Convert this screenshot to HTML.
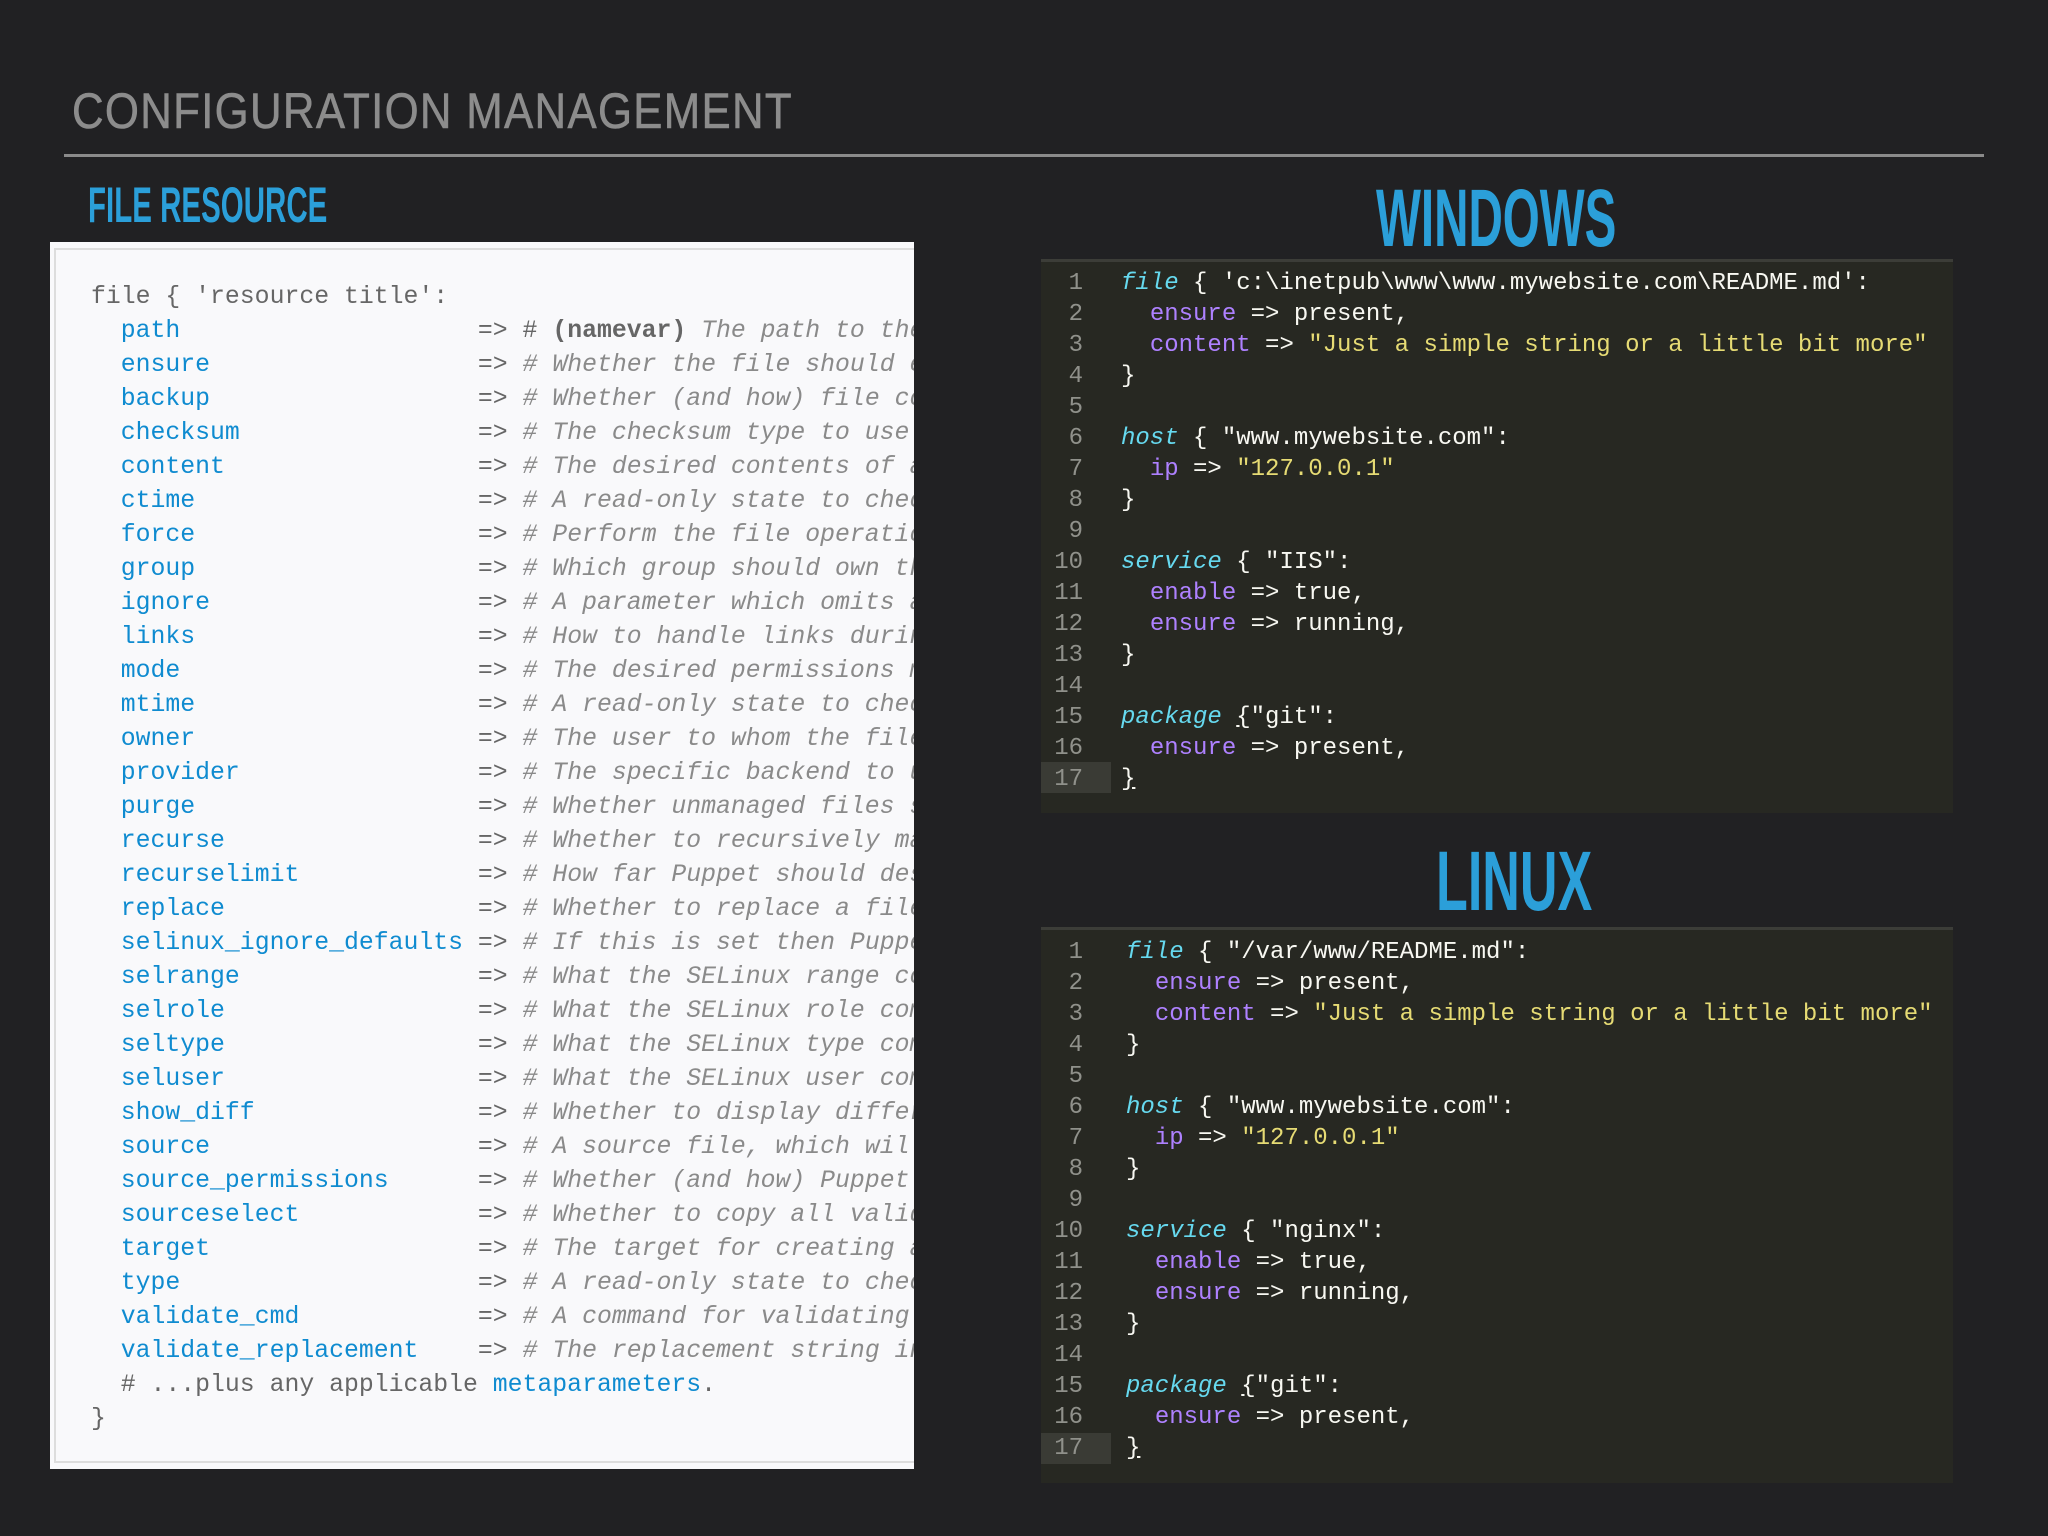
<!DOCTYPE html>
<html><head><meta charset="utf-8"><style>
body{margin:0;width:2048px;height:1536px;background:#212123;position:relative;overflow:hidden;font-family:"Liberation Sans",sans-serif}
.abs{position:absolute;white-space:pre}
#title{left:72px;top:82px;font-size:50px;color:#8c8c8c;letter-spacing:1.5px;transform:scaleX(0.875);transform-origin:0 0;-webkit-text-stroke:0.6px #8c8c8c}
#rule{left:64px;top:154px;width:1920px;height:3px;background:#8a8a8a}
.h{font-family:"Liberation Sans Narrow","Liberation Sans",sans-serif;font-weight:bold;color:#2b9fd9;transform-origin:0 0}
#fr{left:88px;top:176px;font-size:50px;transform:scaleX(0.59)}
#win{left:1376px;top:172px;font-size:82px;transform:scaleX(0.58)}
#lin{left:1436px;top:833px;font-size:84px;transform:scaleX(0.62)}
#panel{left:50px;top:242px;width:864px;height:1227px;background:#f9f9fb;overflow:hidden}
#panel .in{position:absolute;left:4px;top:6px;right:-4px;bottom:6px;border:2px solid #ddd;border-right:none}
.lc{position:absolute;left:41px;font-family:"Liberation Mono",monospace;font-size:24.8px;line-height:34px;color:#666;white-space:pre}
.k{color:#0f8bd0}.c{color:#8a8a8a;font-style:italic}
.box{position:absolute;left:1041px;width:912px;background:#272822;border-top:3px solid #3c3d38}
.ln{position:absolute;left:0;width:42px;text-align:right;color:#90918b}
.row{position:absolute;height:31px;line-height:31px;font-family:"Liberation Mono",monospace;font-size:24px;white-space:pre;color:#f8f8f2;width:100%}
.kw{color:#66d9ef;font-style:italic}.at{color:#ae81ff}.s{color:#e6db74}
.hl{position:absolute;left:0;width:70px;height:31px;background:#3a3b35}
</style></head><body>
<div id="title" class="abs">CONFIGURATION MANAGEMENT</div>
<div id="rule" class="abs"></div>
<div id="fr" class="abs h">FILE RESOURCE</div>
<div id="win" class="abs h">WINDOWS</div>
<div id="lin" class="abs h">LINUX</div>

<div id="panel" class="abs"><div class="in"></div>
<div class="lc" style="top:38px">file { 'resource title':
  <span class="k">path</span>                    =&gt; # <b>(namevar)</b><span class="c"> The path to the file</span>
  <span class="k">ensure</span>                  =&gt; <span class="c"># Whether the file should exist</span>
  <span class="k">backup</span>                  =&gt; <span class="c"># Whether (and how) file content</span>
  <span class="k">checksum</span>                =&gt; <span class="c"># The checksum type to use when</span>
  <span class="k">content</span>                 =&gt; <span class="c"># The desired contents of a file</span>
  <span class="k">ctime</span>                   =&gt; <span class="c"># A read-only state to check the</span>
  <span class="k">force</span>                   =&gt; <span class="c"># Perform the file operation even</span>
  <span class="k">group</span>                   =&gt; <span class="c"># Which group should own the file</span>
  <span class="k">ignore</span>                  =&gt; <span class="c"># A parameter which omits action</span>
  <span class="k">links</span>                   =&gt; <span class="c"># How to handle links during file</span>
  <span class="k">mode</span>                    =&gt; <span class="c"># The desired permissions mode for</span>
  <span class="k">mtime</span>                   =&gt; <span class="c"># A read-only state to check the</span>
  <span class="k">owner</span>                   =&gt; <span class="c"># The user to whom the file should</span>
  <span class="k">provider</span>                =&gt; <span class="c"># The specific backend to use for</span>
  <span class="k">purge</span>                   =&gt; <span class="c"># Whether unmanaged files should be</span>
  <span class="k">recurse</span>                 =&gt; <span class="c"># Whether to recursively manage the</span>
  <span class="k">recurselimit</span>            =&gt; <span class="c"># How far Puppet should descend into</span>
  <span class="k">replace</span>                 =&gt; <span class="c"># Whether to replace a file or</span>
  <span class="k">selinux_ignore_defaults</span> =&gt; <span class="c"># If this is set then Puppet will</span>
  <span class="k">selrange</span>                =&gt; <span class="c"># What the SELinux range component</span>
  <span class="k">selrole</span>                 =&gt; <span class="c"># What the SELinux role component</span>
  <span class="k">seltype</span>                 =&gt; <span class="c"># What the SELinux type component</span>
  <span class="k">seluser</span>                 =&gt; <span class="c"># What the SELinux user component</span>
  <span class="k">show_diff</span>               =&gt; <span class="c"># Whether to display differences</span>
  <span class="k">source</span>                  =&gt; <span class="c"># A source file, which will be</span>
  <span class="k">source_permissions</span>      =&gt; <span class="c"># Whether (and how) Puppet should</span>
  <span class="k">sourceselect</span>            =&gt; <span class="c"># Whether to copy all valid sources</span>
  <span class="k">target</span>                  =&gt; <span class="c"># The target for creating a link</span>
  <span class="k">type</span>                    =&gt; <span class="c"># A read-only state to check the</span>
  <span class="k">validate_cmd</span>            =&gt; <span class="c"># A command for validating the</span>
  <span class="k">validate_replacement</span>    =&gt; <span class="c"># The replacement string in a</span>
  # ...plus any applicable <span class="k">metaparameters</span>.
}</div>
</div>

<div class="box" style="top:259px;height:551px">
<div class="hl" style="top:500px"></div>
<div class="row" style="top:6px"><span class="ln">1</span><span style="position:absolute;left:80px"><span class="kw">file</span> { 'c:\inetpub\www\www.mywebsite.com\README.md':</span></div>
<div class="row" style="top:37px"><span class="ln">2</span><span style="position:absolute;left:80px">  <span class="at">ensure</span> =&gt; present,</span></div>
<div class="row" style="top:68px"><span class="ln">3</span><span style="position:absolute;left:80px">  <span class="at">content</span> =&gt; <span class="s">"Just a simple string or a little bit more"</span></span></div>
<div class="row" style="top:99px"><span class="ln">4</span><span style="position:absolute;left:80px">}</span></div>
<div class="row" style="top:130px"><span class="ln">5</span></div>
<div class="row" style="top:161px"><span class="ln">6</span><span style="position:absolute;left:80px"><span class="kw">host</span> { "www.mywebsite.com":</span></div>
<div class="row" style="top:192px"><span class="ln">7</span><span style="position:absolute;left:80px">  <span class="at">ip</span> =&gt; <span class="s">"127.0.0.1"</span></span></div>
<div class="row" style="top:223px"><span class="ln">8</span><span style="position:absolute;left:80px">}</span></div>
<div class="row" style="top:254px"><span class="ln">9</span></div>
<div class="row" style="top:285px"><span class="ln">10</span><span style="position:absolute;left:80px"><span class="kw">service</span> { "IIS":</span></div>
<div class="row" style="top:316px"><span class="ln">11</span><span style="position:absolute;left:80px">  <span class="at">enable</span> =&gt; true,</span></div>
<div class="row" style="top:347px"><span class="ln">12</span><span style="position:absolute;left:80px">  <span class="at">ensure</span> =&gt; running,</span></div>
<div class="row" style="top:378px"><span class="ln">13</span><span style="position:absolute;left:80px">}</span></div>
<div class="row" style="top:409px"><span class="ln">14</span></div>
<div class="row" style="top:440px"><span class="ln">15</span><span style="position:absolute;left:80px"><span class="kw">package</span> <u>{</u>"git":</span></div>
<div class="row" style="top:471px"><span class="ln">16</span><span style="position:absolute;left:80px">  <span class="at">ensure</span> =&gt; present,</span></div>
<div class="row" style="top:502px"><span class="ln">17</span><span style="position:absolute;left:80px"><u>}</u></span></div>
</div>

<div class="box" style="top:927px;height:553px">
<div class="hl" style="top:503px"></div>
<div class="row" style="top:7px"><span class="ln">1</span><span style="position:absolute;left:85px"><span class="kw">file</span> { "/var/www/README.md":</span></div>
<div class="row" style="top:38px"><span class="ln">2</span><span style="position:absolute;left:85px">  <span class="at">ensure</span> =&gt; present,</span></div>
<div class="row" style="top:69px"><span class="ln">3</span><span style="position:absolute;left:85px">  <span class="at">content</span> =&gt; <span class="s">"Just a simple string or a little bit more"</span></span></div>
<div class="row" style="top:100px"><span class="ln">4</span><span style="position:absolute;left:85px">}</span></div>
<div class="row" style="top:131px"><span class="ln">5</span></div>
<div class="row" style="top:162px"><span class="ln">6</span><span style="position:absolute;left:85px"><span class="kw">host</span> { "www.mywebsite.com":</span></div>
<div class="row" style="top:193px"><span class="ln">7</span><span style="position:absolute;left:85px">  <span class="at">ip</span> =&gt; <span class="s">"127.0.0.1"</span></span></div>
<div class="row" style="top:224px"><span class="ln">8</span><span style="position:absolute;left:85px">}</span></div>
<div class="row" style="top:255px"><span class="ln">9</span></div>
<div class="row" style="top:286px"><span class="ln">10</span><span style="position:absolute;left:85px"><span class="kw">service</span> { "nginx":</span></div>
<div class="row" style="top:317px"><span class="ln">11</span><span style="position:absolute;left:85px">  <span class="at">enable</span> =&gt; true,</span></div>
<div class="row" style="top:348px"><span class="ln">12</span><span style="position:absolute;left:85px">  <span class="at">ensure</span> =&gt; running,</span></div>
<div class="row" style="top:379px"><span class="ln">13</span><span style="position:absolute;left:85px">}</span></div>
<div class="row" style="top:410px"><span class="ln">14</span></div>
<div class="row" style="top:441px"><span class="ln">15</span><span style="position:absolute;left:85px"><span class="kw">package</span> <u>{</u>"git":</span></div>
<div class="row" style="top:472px"><span class="ln">16</span><span style="position:absolute;left:85px">  <span class="at">ensure</span> =&gt; present,</span></div>
<div class="row" style="top:503px"><span class="ln">17</span><span style="position:absolute;left:85px"><u>}</u></span></div>
</div>
</body></html>
